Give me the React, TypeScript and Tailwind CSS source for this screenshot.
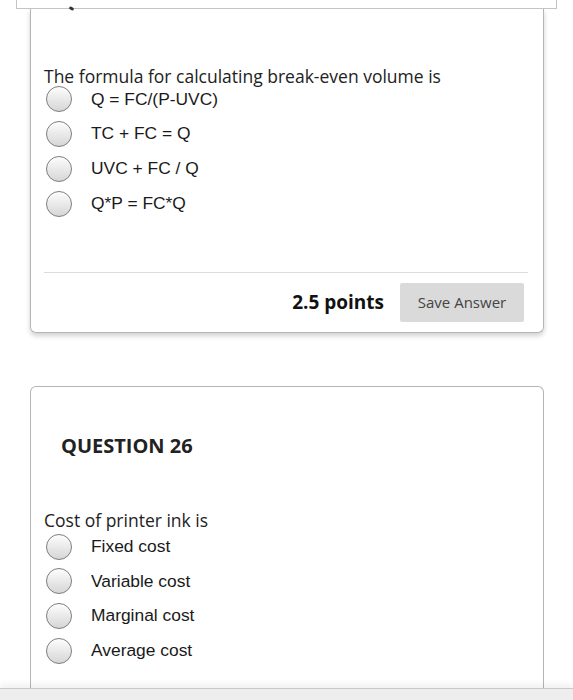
import React from "react";

const Radio = () => (
  <span className="ml-[2px] h-[26px] w-[26px] shrink-0 rounded-full border border-[#7c7c7c] bg-gradient-to-b from-[#fdfdfd] to-[#d6d6d6] shadow-[inset_0_1px_1px_rgba(255,255,255,0.9)]" />
);

function Options({ items }: { items: string[] }) {
  return (
    <div>
      {items.map((item) => (
        <label key={item} className="flex h-[34.8px] items-center">
          <Radio />
          <span className="ml-[19px] text-[17.4px] leading-none text-[#1a1a1a] [font-family:'Liberation_Sans',Arial,sans-serif]">
            {item}
          </span>
        </label>
      ))}
    </div>
  );
}

export default function App() {
  const font = "[font-family:'Open_Sans',sans-serif]";

  return (
    <div className={`min-h-[700px] bg-white ${font}`}>
      {/* bottom edge of the previous panel */}
      <div className="relative mx-[16px] h-[9px] w-[541px] border-x border-b border-[#c4c4c4]">
        <span className="absolute left-[52px] top-[7px] h-[3px] w-[5px] rotate-[30deg] rounded-sm bg-[#333]" />
      </div>

      <div className="ml-[30px] w-[514px] rounded-b-[6px] border-x border-b border-[#b5b5b5] pl-[13px] pr-[15px] pt-[55px] shadow-[0_3px_5px_rgba(0,0,0,0.18)]">
        <p className="text-[17.5px] leading-[24px] text-[#222]">
          The formula for calculating break-even volume is
        </p>
        <div className="-mt-[6px]">
          <Options items={["Q = FC/(P-UVC)", "TC + FC = Q", "UVC + FC / Q", "Q*P = FC*Q"]} />
        </div>
        <div className="mt-[51px] border-t border-[#dcdcdc]" />
        <div className="flex items-center justify-end gap-[16px] pb-[10px] pt-[10px]">
          <span className="text-[19px] font-bold text-[#111]">2.5 points</span>
          <button className="mr-[4px] h-[39px] w-[124px] rounded-[2px] bg-[#dadada] text-[15px] text-[#444]">
            Save Answer
          </button>
        </div>
      </div>

      <div className="ml-[30px] mt-[53px] min-h-[320px] w-[514px] rounded-t-[6px] border-x border-t border-[#b5b5b5] pl-[13px] pr-[15px] pt-[45px]">
        <h2 className="ml-[17px] text-[20px] font-bold leading-[28px] text-[#222]">QUESTION 26</h2>
        <p className="mt-[48px] text-[17.5px] leading-[24px] text-[#222]">Cost of printer ink is</p>
        <div className="-mt-[3px]">
          <Options items={["Fixed cost", "Variable cost", "Marginal cost", "Average cost"]} />
        </div>
      </div>

      <div className="fixed bottom-0 left-0 h-[12px] w-full border-t border-[#c8c8c8] bg-[#eeeeee] shadow-[0_-4px_6px_rgba(0,0,0,0.06)]" />
    </div>
  );
}
